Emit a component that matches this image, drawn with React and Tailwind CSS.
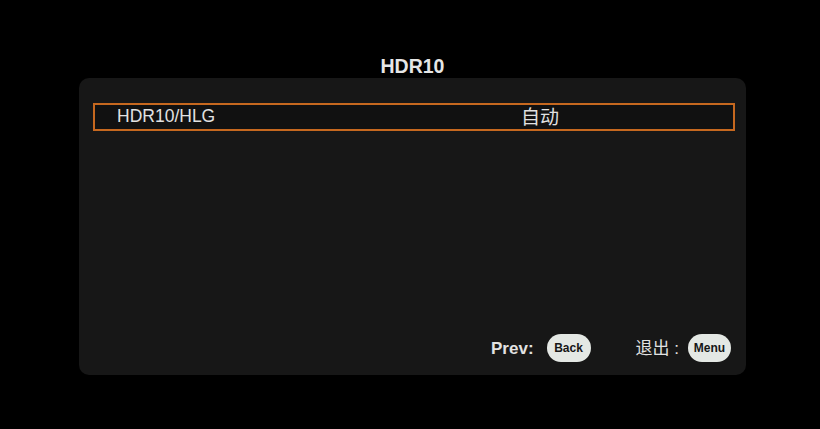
import React from 'react';

const sans = { fontFamily: '"Liberation Sans", Arial, "Noto Sans CJK SC", sans-serif' };

function Pill({ label, width }) {
  return (
    <div
      className={`h-[28px] ${width} rounded-full bg-[#e4e8e4] flex items-center justify-center text-[12px] font-bold text-[#161616] leading-none`}
    >
      {label}
    </div>
  );
}

export default function App() {
  return (
    <div className="w-[820px] h-[429px] bg-black pt-[55px] pl-[79px] text-[#e2e2e2]" style={sans}>
      {/* Title */}
      <div className="w-[667px] h-[23px] text-center text-[19.5px] leading-[22px] font-bold text-[#e6e6e6]">
        HDR10
      </div>

      {/* Panel */}
      <div className="w-[667px] h-[297px] rounded-[10px] bg-[#171717] pt-[25px] pl-[14px] flex flex-col">
        <div className="w-[642px] h-[28px] border-2 border-[#c6681f] bg-[#111111] flex items-center pl-[22px]">
          <span className="w-[404px] text-[17.5px] leading-none">HDR10/HLG</span>
          <span className="text-[19px] leading-none">自动</span>
        </div>

        {/* Footer */}
        <div className="mt-auto pb-[13px] pr-[15px] flex items-center justify-end">
          <span className="text-[17px] font-bold leading-none mr-[13px]">Prev:</span>
          <Pill label="Back" width="w-[44px]" />
          <span className="text-[17px] leading-none ml-[45px] mr-[9px]">退出 :</span>
          <Pill label="Menu" width="w-[43px]" />
        </div>
      </div>
    </div>
  );
}
